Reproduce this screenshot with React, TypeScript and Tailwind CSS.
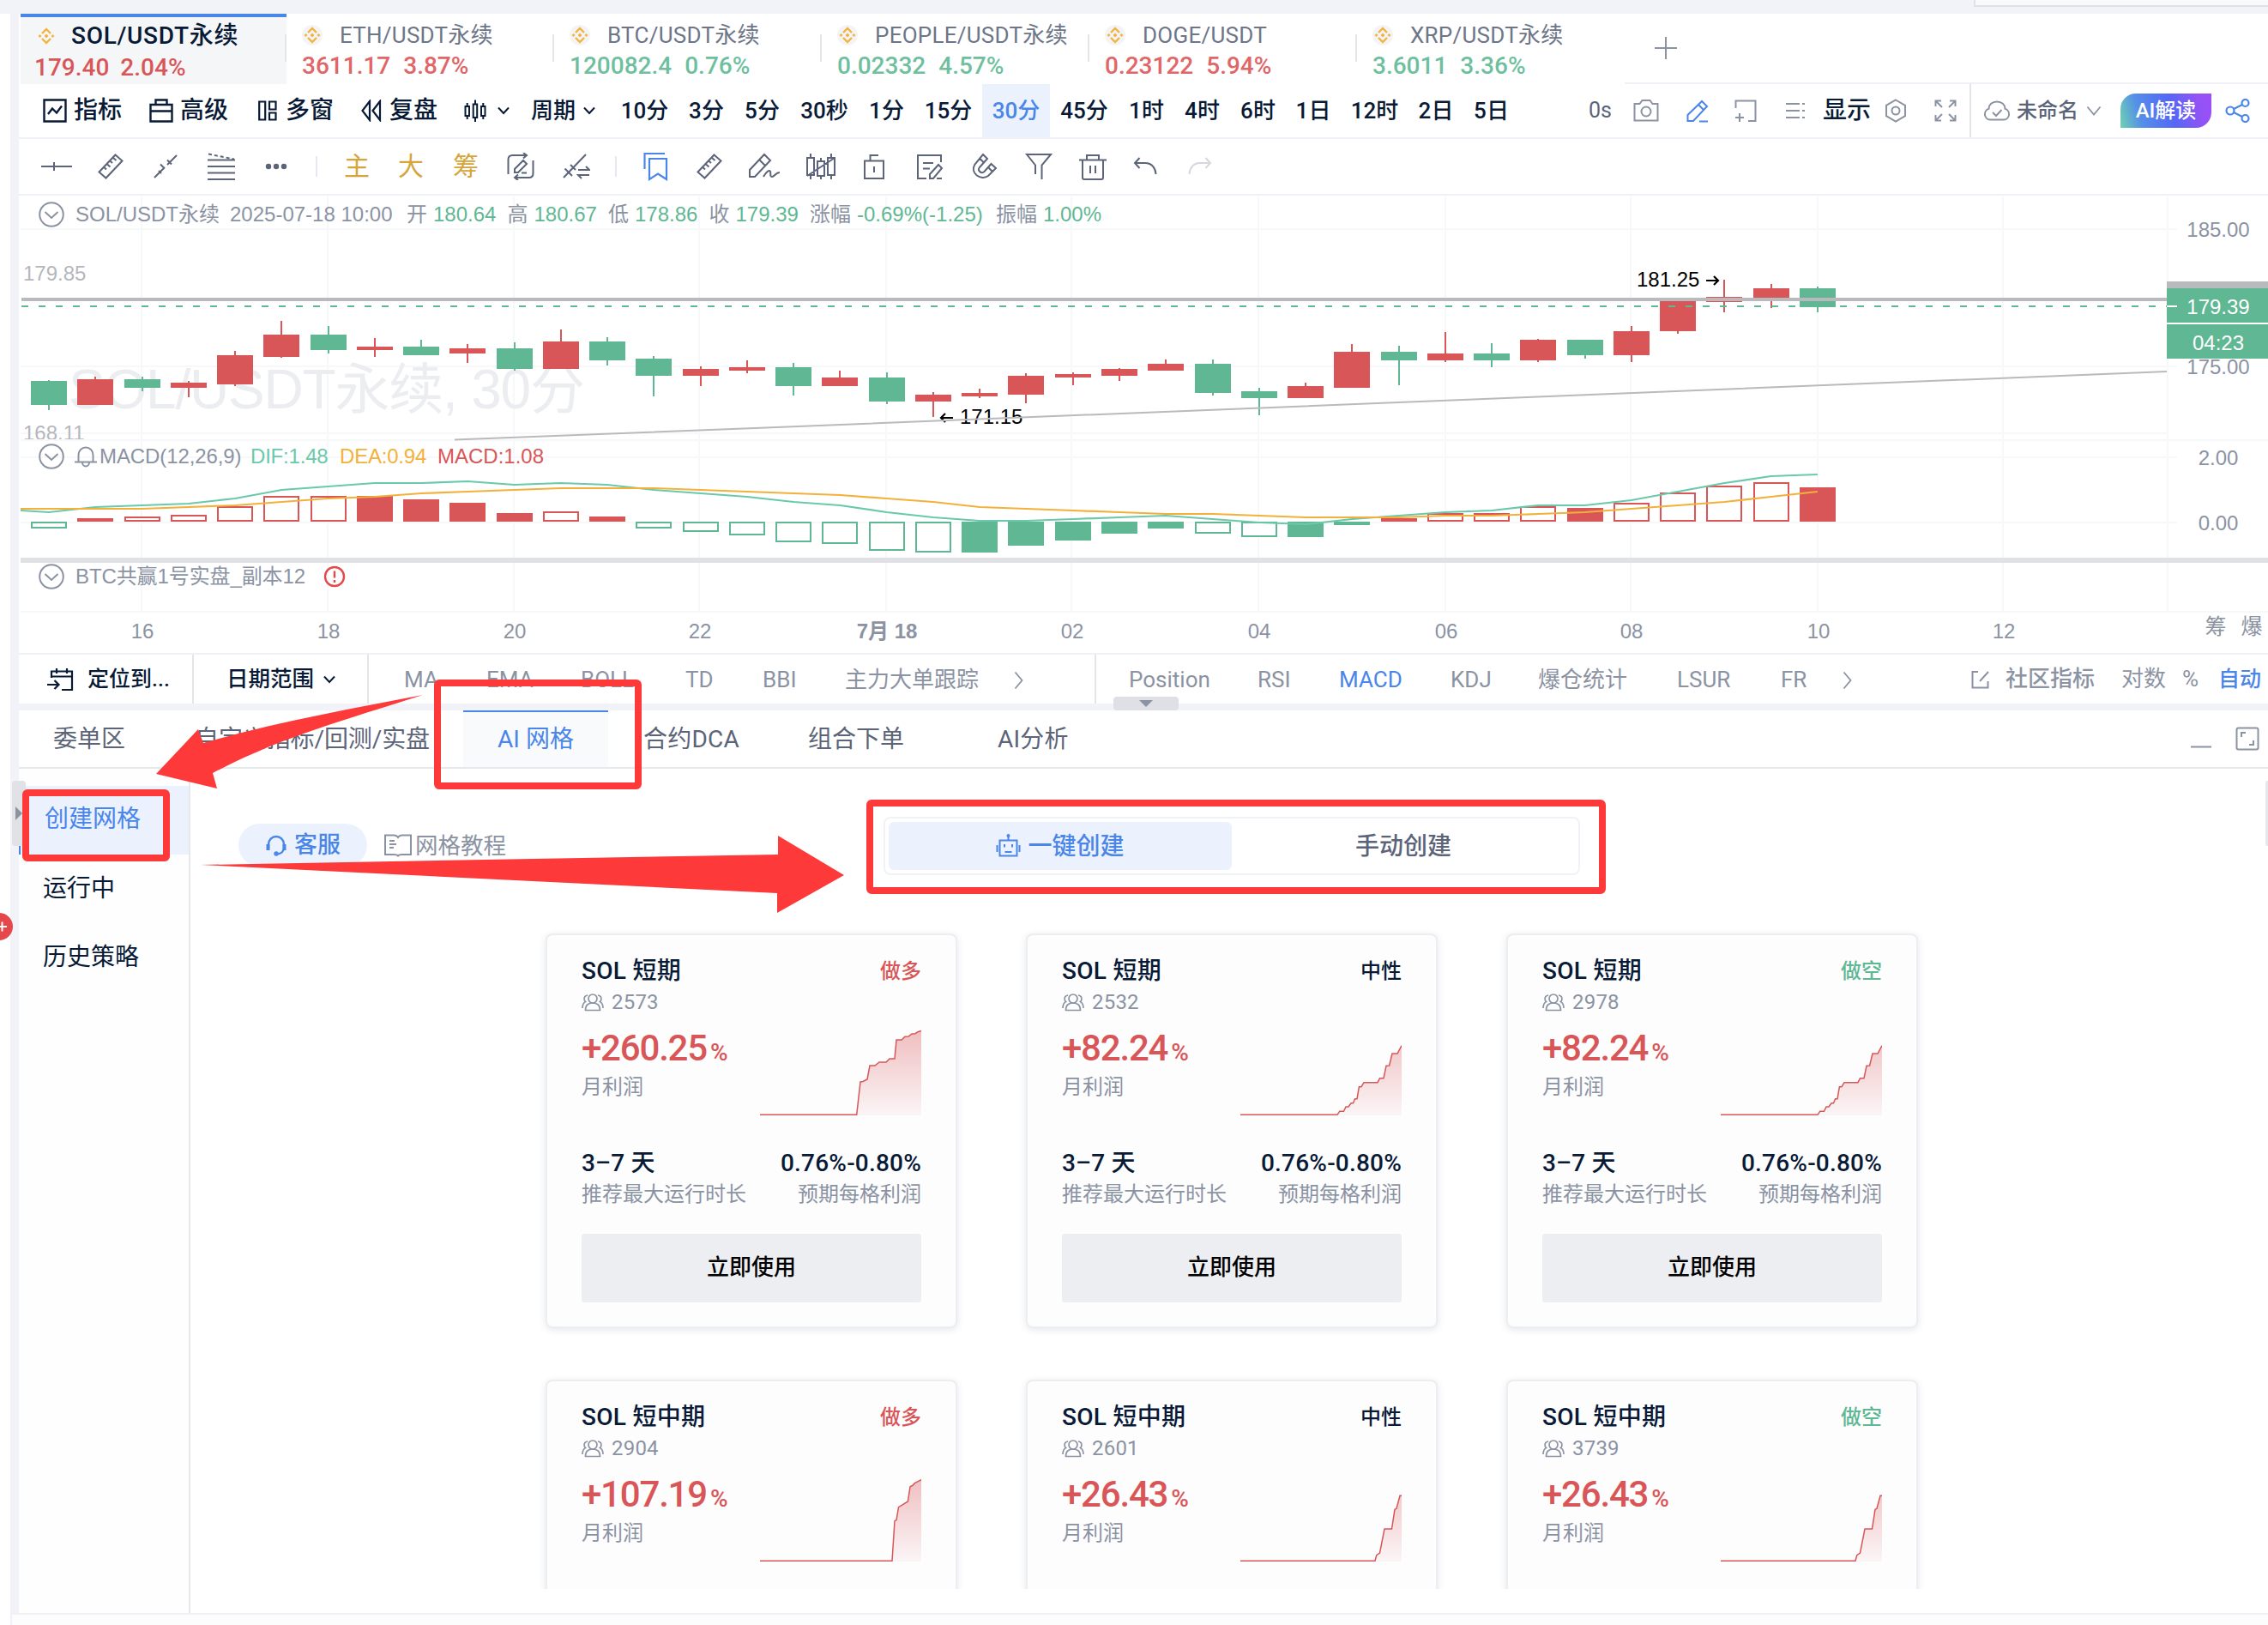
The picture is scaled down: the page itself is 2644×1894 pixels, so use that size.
import type { ReactNode } from "react";

type IconProps = { w?: number; h?: number; className?: string; sw?: number; children: ReactNode };

function Icon({ w = 32, h = 32, className = "", sw = 2, children }: IconProps) {
  return (
    <svg width={w} height={h} viewBox={`0 0 ${w} ${h}`} fill="none" stroke="currentColor" strokeWidth={sw} className={`shrink-0 ${className}`}>
      {children}
    </svg>
  );
}

const ChevronDown = ({ className = "" }: { className?: string }) => (
  <Icon w={16} h={10} className={className}>
    <path d="M2 1.500 8 8l6-6.500" />
  </Icon>
);

const ChevronRight = () => (
  <Icon w={12} h={22} sw={1.8}>
    <path d="M1.500 1.500 9.500 11l-8 9.500" />
  </Icon>
);

const Ruler = () => (
  <Icon>
    <path d="M21.500 2.500 29.500 9.500 10.500 29.500 2.500 22.500zM19 6l3.500 3M15.500 9.800l2.500 2.200M12 13.500l3.500 3M8.500 17.300l2.500 2.200" />
  </Icon>
);

const CircleChevron = () => (
  <Icon w={30} h={30}>
    <circle cx="15" cy="15" r="13.8" />
    <path d="m7.500 12 7.500 7 7.500-7" />
  </Icon>
);

const Binance = ({ plain = false }: { plain?: boolean }) => (
  <svg width="24" height="24" viewBox="0 0 24 24" className="shrink-0">
    {!plain && <circle cx="12" cy="12" r="12" fill="#f3f4f6" />}
    <g fill="none" stroke="#f3b341" strokeWidth="2.400">
      <path d="m7 9 5-5 5 5M7 15l5 5 5-5" />
    </g>
    <path fill="#f3b341" d="m12 9.500 2.500 2.500-2.500 2.500L9.500 12zM4.500 10l2 2-2 2-2-2zM19.500 10l2 2-2 2-2-2z" />
  </svg>
);

/* ---------- symbol tabs ---------- */

const tabs = [
  { name: "ETH/USDT永续", price: "3611.17", pct: "3.87%", color: "text-[#e06668]" },
  { name: "BTC/USDT永续", price: "120082.4", pct: "0.76%", color: "text-[#6fbf9f]" },
  { name: "PEOPLE/USDT永续", price: "0.02332", pct: "4.57%", color: "text-[#6fbf9f]" },
  { name: "DOGE/USDT", price: "0.23122", pct: "5.94%", color: "text-[#e06668]" },
  { name: "XRP/USDT永续", price: "3.6011", pct: "3.36%", color: "text-[#6fbf9f]" },
];

function SymbolTabs() {
  return (
    <div className="flex h-[82px] pl-[2px]">
      <div className="h-full w-[310px] border-t-4 border-[#4a86e8] bg-[#f5f6f8] pl-[18px] pt-2">
        <div className="flex h-[28px] items-center">
          <Binance plain />
          <span className="ml-[17px] text-[28px] font-medium leading-[28px] tracking-[0.7px] text-[#081a36]">SOL/USDT永续</span>
        </div>
        <div className="-ml-[2px] mt-[8px] flex gap-[13px] text-[28px] font-medium leading-[30px] text-[#d95658]">
          <span>179.40</span>
          <span>2.04%</span>
        </div>
      </div>
      {tabs.map((t) => (
        <div key={t.name} className="relative w-[312px] pl-[18px] pt-3">
          <i className="absolute -left-[2px] top-6 h-8 w-[2px] bg-[#e3e5e8]" />
          <div className="flex h-[26px] items-center">
            <Binance />
            <span className="ml-5 text-[26px] leading-[28px] tracking-[0.25px] text-[#6d7688]">{t.name}</span>
          </div>
          <div className={`mt-[8px] flex gap-[15px] text-[28px] font-medium leading-[30px] ${t.color}`}>
            <span>{t.price}</span>
            <span>{t.pct}</span>
          </div>
        </div>
      ))}
      <div className="flex-1 border-b-2 border-[#f0f1f6] pl-[34px] pt-[26px] text-[#8b93a3]">
        <Icon w={28} h={28}>
          <path d="M14 1v26M1 14h26" />
        </Icon>
      </div>
    </div>
  );
}

/* ---------- period bar ---------- */

const periods = [
  ["10分", "w-[79px]"],
  ["3分", "w-[65px]"],
  ["5分", "w-[65px]"],
  ["30秒", "w-[80px]"],
  ["1分", "w-[65px]"],
  ["15分", "w-[79px]"],
  ["30分", "w-[79px]"],
  ["45分", "w-[80px]"],
  ["1时", "w-[65px]"],
  ["4时", "w-[65px]"],
  ["6时", "w-[65px]"],
  ["1日", "w-[64px]"],
  ["12时", "w-[79px]"],
  ["2日", "w-[64px]"],
  ["5日", "w-[65px]"],
];

function PeriodBar() {
  return (
    <div className="flex h-[64px] items-center border-b-2 border-[#f0f1f6] pl-[28px] text-[28px] font-medium text-[#081a36]">
      <div className="flex w-[124px] items-center gap-[8px]">
        <Icon w={28} h={28} sw={2.4}>
          <path d="M1.500 1.500h25v25h-25zM6 18l5-6.500 5 5 6-8" />
        </Icon>
        指标
      </div>
      <div className="flex w-[127px] items-center gap-[8px]">
        <Icon w={28} h={28} sw={2.4}>
          <path d="M1.500 7h25v19.500h-25zM7.500 7V1.500h13V7M1.500 14.500h25" />
        </Icon>
        高级
      </div>
      <div className="flex w-[120px] items-center gap-[10px]">
        <Icon w={22} h={24} sw={2.2}>
          <path d="M1.200 1.500h7v21h-7zM13 1.500h7.500v9H13zM13 14.500h7.500v8H13z" />
        </Icon>
        多窗
      </div>
      <div className="flex w-[120px] items-center gap-[9px]">
        <Icon w={24} h={26} sw={2.2}>
          <path d="M10 2 1.500 13 10 24zM22 2l-8.500 11L22 24z" />
        </Icon>
        复盘
      </div>
      <div className="flex w-[78px] items-center gap-[12px]">
        <Icon w={26} h={28} sw={2}>
          <path d="M1.500 9h4.500v11H1.500zM3.700 5v4M3.700 20v4M10.700 6.500h4.500v15.500h-4.500zM13 1.500v5M13 22v5M20 9h4.500v11H20zM22.300 5v4M22.300 20v4" />
        </Icon>
        <ChevronDown />
      </div>
      <div className="flex w-[93px] items-center gap-2 text-[26px]">
        周期
        <ChevronDown />
      </div>
      {periods.map(([label, w]) => (
        <div
          key={label}
          className={`flex h-[62px] shrink-0 items-center justify-center text-[26px] ${w} ${label === "30分" ? "bg-[#ebf2fd] text-[#4a86e8]" : ""}`}
        >
          {label}
        </div>
      ))}
      <div className="ml-[81px] w-[52px] text-[25px] font-normal text-[#5b6478]">0s</div>
      <div className="flex w-[62px] text-[#8b93a3]">
        <Icon w={30} h={26}>
          <path d="M1.500 5h6l3-4h9l3 4h6v19.500h-27z" />
          <circle cx="15" cy="14" r="5.500" />
        </Icon>
      </div>
      <div className="flex w-[56px] text-[#4a86e8]">
        <Icon w={26} h={27}>
          <path d="M1.500 25v-7L18 2l6 6L8 25zM14 6l6 6M15 25.500h10" />
        </Icon>
      </div>
      <div className="flex w-[59px] text-[#8b93a3]">
        <Icon w={26} h={27}>
          <path d="M1.500 10V1.500h23V25H16M6 16v10M1 21h10" />
        </Icon>
      </div>
      <div className="flex w-[44px] text-[#8b93a3]">
        <Icon w={24} h={22}>
          <path d="M1 3h16M1 11h16M1 19h16M20 3h3M20 11h3M20 19h3" />
        </Icon>
      </div>
      <div className="w-[72px]">显示</div>
      <div className="flex w-[58px] text-[#8b93a3]">
        <Icon w={26} h={28}>
          <path d="m13 1.500 11 6.300v12.400L13 26.500 2 20.200V7.800z" />
          <circle cx="13" cy="14" r="4.500" />
        </Icon>
      </div>
      <div className="flex w-[41px] text-[#8b93a3]">
        <Icon w={26} h={26}>
          <path d="M1.500 8V1.500H8M1.500 1.500 9 9M18 1.500h6.500V8M24.500 1.500 17 9M1.500 18v6.500H8M1.500 24.500 9 17M18 24.500h6.500V18M24.500 24.500 17 17" />
        </Icon>
      </div>
      <div className="flex h-[62px] items-center border-l-2 border-[#e3e5e8] pl-[14px] text-[24px] text-[#5b6478]">
        <Icon w={32} h={24} className="text-[#8b93a3]">
          <path d="M8 22.500a6.500 6.500 0 0 1-1.500-12.700C6.500 5 10.500 1.500 16 1.500S25.500 5 25.500 9.800A6.500 6.500 0 0 1 24 22.500z" />
          <path d="m11 14 4 4 6.500-7" />
        </Icon>
        <span className="ml-[7px] w-[81px]">未命名</span>
        <Icon w={18} h={12} sw={1.8} className="text-[#8b93a3]">
          <path d="m1.500 1.500 7.500 9 7.500-9" />
        </Icon>
      </div>
      <div className="ml-[22px] flex h-10 w-[106px] items-center justify-center rounded-br-[18px] rounded-tl-[18px] bg-[linear-gradient(75deg,#6fd3b0_0%,#5590e8_22%,#5468f5_55%,#9352f6_85%,#9c4ff6_100%)] text-[24px] font-medium text-white">
        AI解读
      </div>
      <Icon w={30} h={28} className="ml-4 text-[#4a86e8]" sw={2.2}>
        <circle cx="6" cy="14" r="4.500" />
        <circle cx="23.500" cy="5" r="4" />
        <circle cx="23.500" cy="23" r="4" />
        <path d="m10 12 10-5M10 16l10 5" />
      </Icon>
    </div>
  );
}

/* ---------- drawing tools ---------- */

function DrawingBar() {
  return (
    <div className="flex h-[66px] items-center border-b-2 border-[#f0f1f6] pl-[26px] text-[#5b6478]">
      <div className="w-[65px]">
        <Icon w={36}>
          <path d="M0 16h36M15 11v10" />
        </Icon>
      </div>
      <div className="w-[66px]">
        <Ruler />
      </div>
      <div className="w-[63px]">
        <Icon w={28}>
          <path d="M1 29 13 17M16 14 27 3M8 13.500 13 18.500M16 8.500l5 5M6 21l3 3" />
        </Icon>
      </div>
      <div className="w-[65px]">
        <Icon w={32}>
          <path d="M0 8.500h32M0 16h32M0 23.500h32M0 31h32" />
          <path d="m1 1.500 30 6" strokeDasharray="4 3" />
        </Icon>
      </div>
      <div className="w-[61px] pl-[1px]">
        <Icon w={28} h={8}>
          <g fill="currentColor" stroke="none">
            <circle cx="5" cy="4" r="3.200" />
            <circle cx="14" cy="4" r="3.200" />
            <circle cx="23" cy="4" r="3.200" />
          </g>
        </Icon>
      </div>
      <i className="h-6 w-[2px] bg-[#e6e9ef]" />
      <div className="flex pl-[31px] text-[30px] leading-[32px] text-[#d6a53a]">
        <span className="w-[63px]">主</span>
        <span className="w-[64px]">大</span>
        <span className="w-[63px]">筹</span>
      </div>
      <div className="w-[65px]">
        <Icon>
          <path d="M1.500 25V8c0-3 2-5 5-5h17M19 0l4 3-4 3.500M30.500 9v15c0 3-2 5-5 5h-17M13 25.500l-4 3.500 4 3M9 23v-4l10-10 4 4-10 10zM17 23.500h6" />
        </Icon>
      </div>
      <div className="w-[61px]">
        <Icon>
          <path d="M1 29 27 2M2.500 18.500 11 27M9 14l6 6M18 20h13l-4-4M31 26H18l4 4" />
        </Icon>
      </div>
      <i className="h-6 w-[2px] bg-[#e6e9ef]" />
      <div className="ml-[31px] w-[61px] text-[#4a86e8]">
        <Icon w={30} h={34} sw={2.2}>
          <path d="M1.500 20V2H25M7 8h20v24l-10-6.500L7 32z" />
        </Icon>
      </div>
      <div className="w-[61px]">
        <Ruler />
      </div>
      <div className="w-[67px]">
        <Icon w={38}>
          <path d="M2 28v-8L19 2l7 7L8 28zM13 8l7 7M18 28c4-7 7-8 8-6s-1 6 2 6 4-5 9-5" />
        </Icon>
      </div>
      <div className="w-[67px]">
        <Icon w={36}>
          <path d="M2 6h8v20H2zM14 10h8v17h-8zM26 6h8v20h-8zM6 1v5M6 26v5M18 6v4M18 27v4M30 1v5M30 26v5M2 27 34 6" />
        </Icon>
      </div>
      <div className="w-[62px]">
        <Icon w={26}>
          <path d="M2 9.500h22V30H2zM8.500 9.500V3H18M13 16v7" />
        </Icon>
      </div>
      <div className="w-[64px]">
        <Icon>
          <path d="M12 30H2V3h27v8M8 12h12M8 18.500h8M16 30v-5l10-11 4 4-10 12zM24 30h6" />
        </Icon>
      </div>
      <div className="w-[63px]">
        <Icon>
          <path d="m14 2 5 5-9 10c-3 4 2 8 5.500 5l8-9 5.500 5-9 9C12 33-2 24 4.500 13.500zM10 6.500l5 5M20 17l5 5" />
        </Icon>
      </div>
      <div className="w-[63px]">
        <Icon>
          <path d="M12 25V14.500L2 2h28L19.500 14.500V31" />
        </Icon>
      </div>
      <div className="w-[63px]">
        <Icon>
          <path d="M0 8.500h32M9 8.500V3h14v5.500M4 8.500V29c0 1 1 2 2 2h20c1 0 2-1 2-2V8.500M13 15v9M19 15v9" />
        </Icon>
      </div>
      <div className="w-[64px]">
        <Icon w={28} h={22}>
          <path d="M7.500 1 2 7l5.500 6M2 7h12c8 0 12 6 12.500 13" />
        </Icon>
      </div>
      <div className="text-[#d5d8de]">
        <Icon w={28} h={22}>
          <path d="m20.500 1 5.500 6-5.500 6M26 7H14C6 7 2 13 1.500 20" />
        </Icon>
      </div>
    </div>
  );
}

/* ---------- chart ---------- */

const UP = "#d95658";
const DOWN = "#5fb794";
const candleX = (i: number) => 57 + i * 54.26;

// [up, bodyTop, bodyBottom, wickTop, wickBottom]
const candles: [number, number, number, number, number][] = [
  [0, 444, 472, 443, 478],
  [1, 442, 472, 439, 472],
  [0, 442, 452, 439, 456],
  [1, 446, 452, 444, 463],
  [1, 414, 448, 409, 450],
  [1, 390, 416, 374, 417],
  [0, 390, 408, 380, 412],
  [1, 404, 408, 394, 416],
  [0, 404, 414, 396, 414],
  [1, 406, 412, 401, 423],
  [0, 406, 430, 399, 432],
  [1, 398, 430, 384, 430],
  [0, 398, 420, 393, 426],
  [0, 418, 438, 415, 462],
  [1, 430, 438, 427, 450],
  [1, 428, 432, 420, 435],
  [0, 428, 450, 423, 461],
  [1, 440, 450, 432, 450],
  [0, 440, 468, 434, 471],
  [1, 460, 468, 457, 486],
  [1, 458, 462, 453, 464],
  [1, 438, 460, 435, 470],
  [1, 436, 440, 434, 449],
  [1, 430, 438, 429, 444],
  [1, 424, 432, 419, 432],
  [0, 424, 458, 419, 461],
  [0, 456, 464, 452, 484],
  [1, 450, 464, 446, 464],
  [1, 410, 452, 401, 452],
  [0, 410, 420, 403, 449],
  [1, 412, 420, 387, 422],
  [0, 412, 420, 400, 428],
  [1, 396, 420, 395, 422],
  [0, 396, 414, 396, 418],
  [1, 386, 414, 380, 422],
  [1, 350, 386, 350, 389],
  [1, 346, 352, 326, 364],
  [1, 336, 350, 331, 359],
  [0, 336, 358, 334, 364],
];

// [far edge of the bar, filled]
const macd: [number, number][] = [
  [616, 0], [604, 1], [602, 0], [600, 0], [590, 0], [578, 0], [578, 0], [578, 1], [582, 1], [586, 1],
  [598, 1], [596, 0], [602, 1], [616, 0], [620, 0], [624, 0], [632, 0], [634, 0], [642, 0], [644, 0],
  [644, 1], [636, 1], [630, 1], [622, 1], [616, 1], [622, 0], [626, 0], [626, 1], [612, 1], [604, 1],
  [598, 0], [598, 0], [590, 0], [592, 1], [586, 0], [574, 0], [566, 0], [562, 0], [568, 1],
];

const dif = [
  597, 591, 589, 587, 581, 571, 567, 563, 563, 561, 565, 563, 565, 571, 575, 579, 585, 589, 597, 603,
  607, 607, 605, 603, 601, 605, 609, 611, 605, 601, 597, 595, 589, 589, 583, 573, 563, 555, 553,
];
const dea = [
  593, 593, 593, 591, 589, 585, 581, 579, 575, 573, 571, 569, 569, 569, 571, 573, 575, 577, 581, 585,
  591, 593, 595, 597, 599, 599, 601, 603, 603, 603, 601, 601, 599, 597, 593, 589, 585, 579, 573,
];
const toPoints = (ys: number[]) => ys.map((y, i) => `${candleX(i)},${y}`).join(" ");

const gridX = [165, 382, 599, 815, 1033, 1249, 1467, 1685, 1901, 2119, 2335];
const times = ["16", "18", "20", "22", "7月 18", "02", "04", "06", "08", "10", "12"];

function Chart() {
  return (
    <svg width="2620" height="533" viewBox="24 228 2620 533" fontSize="24" fill="#8b93a3" className="block font-['Liberation_Sans','Noto_Sans_CJK_SC',sans-serif]">
      <g stroke="#f7f8fa" strokeWidth="2">
        {gridX.map((x) => (
          <path key={x} d={`M${x} 229V713`} />
        ))}
        <path d="M24 267H2538M24 427H2538M24 505H2526M24 513H2644M24 533H2538M24 609H2538M24 713H2644M2527 229V713" />
      </g>
      <text x="80" y="476" fontSize="64" textLength="602" fill="#ecedf0">SOL/USDT永续, 30分</text>

      {candles.map(([up, top, bottom, high, low], i) => (
        <g key={i} fill={up ? UP : DOWN}>
          <rect x={Math.round(candleX(i)) - 1} y={high} width="2" height={low - high} />
          <rect x={Math.round(candleX(i)) - 21} y={top} width="42" height={bottom - top} />
        </g>
      ))}
      <path d="M25 349H2526" stroke="#b9babd" strokeWidth="4" />
      <path d="M25 357H2526" stroke={DOWN} strokeWidth="2" strokeDasharray="8 12" />

      {macd.map(([edge, filled], i) => {
        const color = edge < 608 ? UP : DOWN;
        return (
          <rect
            key={i}
            x={Math.round(candleX(i)) - 20}
            y={Math.min(edge, 608) + 1}
            width="40"
            height={Math.abs(edge - 608) - 2}
            fill={filled ? color : "#fff"}
            stroke={color}
            strokeWidth="2"
          />
        );
      })}
      <g fill="none" strokeWidth="2.200">
        <polyline points={`24,595 ${toPoints(dif)}`} stroke="#6ac9ab" />
        <polyline points={`24,593 ${toPoints(dea)}`} stroke="#f3b13c" />
      </g>

      <g fill="#000">
        <text x="1908" y="334">181.25</text>
        <text x="1119" y="494">171.15</text>
      </g>
      <g fill="none" stroke="#000" strokeWidth="2.200">
        <path d="M1989 327h14M1998 322l5 5-5 5M1111 487h-14M1102 482l-5 5 5 5" />
      </g>
      <path d="M530 512.500 880 499 1780 463 2526 433" fill="none" stroke="#b9babd" strokeWidth="2" />

      <g fill="#b5b7bd">
        <text x="27" y="327">179.85</text>
        <svg x="24" y="490" width="100" height="22" viewBox="0 0 100 22">
          <text x="3" y="23">168.11</text>
        </svg>
      </g>
      <path d="M24 653H2644" stroke="#dfe1e5" strokeWidth="6" />

      <g textAnchor="middle">
        <text x="2586" y="276">185.00</text>
        <text x="2586" y="436">175.00</text>
        <text x="2586" y="542">2.00</text>
        <text x="2586" y="618">0.00</text>
        {times.map((t, i) => (
          <text key={t} x={gridX[i] + 1} y="744" fontWeight={t.length > 2 ? 700 : 400}>{t}</text>
        ))}
        <text x="2583" y="739" fontSize="25">筹</text>
        <text x="2625" y="739" fontSize="25">爆</text>
        <rect x="2526" y="328" width="118" height="8" fill="#b9babd" />
        <rect x="2526" y="336" width="118" height="40" fill={DOWN} />
        <rect x="2526" y="378" width="118" height="40" fill={DOWN} />
        <path d="M2526 357h12" stroke="#fff" strokeWidth="2" />
        <text x="2586" y="366" fill="#fff">179.39</text>
        <text x="2586" y="408" fill="#fff">04:23</text>
      </g>
    </svg>
  );
}

const ohlc = [
  ["开", "180.64"],
  ["高", "180.67"],
  ["低", "178.86"],
  ["收", "179.39"],
];

function ChartPanel() {
  return (
    <div className="relative h-[535px] border-b-2 border-[#f0f1f6] pl-[2px] font-['Liberation_Sans','Noto_Sans_CJK_SC',sans-serif] text-[24px] leading-[30px] text-[#8b93a3]">
      <Chart />
      <div className="absolute left-[23px] top-[7px] flex h-[30px] items-center whitespace-nowrap">
        <CircleChevron />
        <span className="ml-[13px] w-[180px]">SOL/USDT永续</span>
        <span className="w-[206px]">2025-07-18 10:00</span>
        {ohlc.map(([k, v]) => (
          <span key={k} className="flex w-[117.500px]">
            <span className="w-[31px]">{k}</span>
            <span className="text-[#5fb794]">{v}</span>
          </span>
        ))}
        <span className="w-[55px]">涨幅</span>
        <span className="w-[162px] text-[#5fb794]">-0.69%(-1.25)</span>
        <span className="w-[55px]">振幅</span>
        <span className="text-[#5fb794]">1.00%</span>
      </div>
      <div className="absolute left-[23px] top-[289px] flex h-[30px] items-center whitespace-nowrap">
        <CircleChevron />
        <Icon w={26} h={26} className="ml-[12px]">
          <path d="M4.500 19V11a8.500 8.500 0 0 1 17 0v8M0 19.500h26M9 20c0 6 8 6 8 0" />
        </Icon>
        <span className="ml-[3px] w-[176px] tracking-[-0.1px]">MACD(12,26,9)</span>
        <span className="w-[104px]  text-[#6ac9ab] tracking-[-0.2px]">DIF:1.48</span>
        <span className="w-[114px] text-[#f3b13c] tracking-[-0.2px]">DEA:0.94</span>
        <span className="text-[#d95658]">MACD:1.08</span>
      </div>
      <div className="absolute left-[23px] top-[429px] flex h-[30px] items-center whitespace-nowrap">
        <CircleChevron />
        <span className="ml-[13px] w-[289px] tracking-[-0.1px]">BTC共赢1号实盘_副本12</span>
        <Icon w={26} h={26} sw={2.4} className="text-[#e5484a]">
          <circle cx="13" cy="13" r="11" />
          <path d="M13 6.500v8M13 17v3" />
        </Icon>
      </div>
    </div>
  );
}

/* ---------- indicator bar ---------- */

const mainIndicators = [
  ["MA", "w-[96px]"],
  ["EMA", "w-[110px]"],
  ["BOLL", "w-[122px]"],
  ["TD", "w-[90px]"],
  ["BBI", "w-[96px]"],
  ["主力大单跟踪", "w-[197px]"],
];
const subIndicators = [
  ["Position", "w-[150px]"],
  ["RSI", "w-[95px]"],
  ["MACD", "w-[130px]"],
  ["KDJ", "w-[102px]"],
  ["爆仓统计", "w-[162px]"],
  ["LSUR", "w-[121px]"],
  ["FR", "w-[72px]"],
];

function IndicatorBar() {
  return (
    <div className="relative flex h-[65px] items-center border-b-8 border-[#f2f3f8] whitespace-nowrap text-[26px] text-[#8b93a3]">
      <div className="flex h-full w-[204px] items-center border-r-2 border-[#e3e5e8] pl-[33px] text-[25px] font-medium text-[#081a36]">
        <Icon w={32} h={28} sw={2.2} className="mr-[15px]">
          <path d="M5 12V4.500h24V26H17M11 1v6M23 1v6M5 10.500h24M0 20h13M8.500 15l5 5-5 5" />
        </Icon>
        定位到...
      </div>
      <div className="flex h-full w-[204px] items-center border-r-2 border-[#e3e5e8] pl-[38px] text-[25.500px] font-medium text-[#081a36]">
        <span className="w-[112px]">日期范围</span>
        <ChevronDown />
      </div>
      <div className="flex h-full w-[848px] items-center border-r-2 border-[#e3e5e8] pl-[41px] pt-[2px]">
        {mainIndicators.map(([label, w]) => (
          <span key={label} className={`shrink-0 ${w}`}>{label}</span>
        ))}
        <ChevronRight />
      </div>
      <div className="flex h-full items-center pl-[38px] pt-[2px]">
        {subIndicators.map(([label, w]) => (
          <span key={label} className={`shrink-0 ${w} ${label === "MACD" ? "text-[#4a86e8]" : ""}`}>{label}</span>
        ))}
        <ChevronRight />
      </div>
      <Icon w={22} h={22} className="ml-[138px] mr-[18px]">
        <path d="M8 2H1.500v18.500h18V13M20 2 10 13" />
      </Icon>
      <span className="w-[135px] font-medium">社区指标</span>
      <span className="w-[71px]">对数</span>
      <span className="w-[42px] text-[26px]">%</span>
      <span className="text-[25px] font-medium text-[#4a86e8]">自动</span>
      <div className="absolute left-[1276px] top-[49px] flex h-4 w-[76px] items-center justify-center rounded bg-[#dee0e5]">
        <svg width="16" height="8" viewBox="0 0 16 8" fill="#8b93a3">
          <path d="M0 0h16L8 8z" />
        </svg>
      </div>
    </div>
  );
}

/* ---------- bottom tabs ---------- */

function BottomTabs() {
  return (
    <div className="flex h-[68px] border-b-2 border-[#e6e9ec] whitespace-nowrap text-[28px] leading-[68px] text-[#5b6478]">
      <span className="ml-[40px] w-[165px]">委单区</span>
      <span className="w-[313px] tracking-[-0.1px]">自定义指标/回测/实盘</span>
      <span className="h-[66px] w-[169px] border-t-2 border-[#4a86e8] bg-[#f9fafc] text-center leading-[64px] text-[#4a86e8]">AI 网格</span>
      <span className="ml-[41px] w-[192px] tracking-[0.2px]">合约DCA</span>
      <span className="w-[221px]">组合下单</span>
      <span className="tracking-[0.2px]">AI分析</span>
      <div className="ml-auto flex items-center gap-7 pr-[10px] text-[#8b93a3]">
        <Icon w={24} h={24}>
          <path d="M0 21.500h24" />
        </Icon>
        <Icon w={28} h={28}>
          <rect x="1.500" y="1.500" width="25" height="25" rx="2" />
          <path d="M7 12V7h5M16 21h5v-5" />
        </Icon>
      </div>
    </div>
  );
}

/* ---------- strategy cards ---------- */

const sparks = {
  longShort: "112.700,99.300 117,61 120,60.500 125,58 128,42 134,42 139,38 147,38 151,34 157,34 159,12 165,12 169,8.300 173,8 177,5 181,4.700 184,2.700 188,1.500",
  short: "113,99.300 115.700,95.300 120.500,95.300 123,90 126,90 129,85.700 131.500,85.700 133.600,80.700 136,80.700 138.400,66.700 141,66.700 144,61.700 160,61.700 162.500,56.700 167,56.700 170,42.300 173.600,42 177,28 183,28 188,18.700",
  longMid: "154,99.300 157,52.700 159,51.700 161.500,36.700 166.500,33.700 172.400,30 175,12.700 178,11.300 180.400,8.700 188,4.700",
  mid: "157,99.300 158.700,92.700 162.500,90 168,62 176.500,62 180,39.300 182,38.300 186,23.300 188,23.300",
};

type Strategy = { title: string; side: string; users: string; profit: string; spark: string };

const shortTerm: Strategy[] = [
  { title: "SOL 短期", side: "做多", users: "2573", profit: "+260.25", spark: sparks.longShort },
  { title: "SOL 短期", side: "中性", users: "2532", profit: "+82.24", spark: sparks.short },
  { title: "SOL 短期", side: "做空", users: "2978", profit: "+82.24", spark: sparks.short },
];
const midTerm: Strategy[] = [
  { title: "SOL 短中期", side: "做多", users: "2904", profit: "+107.19", spark: sparks.longMid },
  { title: "SOL 短中期", side: "中性", users: "2601", profit: "+26.43", spark: sparks.mid },
  { title: "SOL 短中期", side: "做空", users: "3739", profit: "+26.43", spark: sparks.mid },
];

const sideColor: Record<string, string> = {
  做多: "text-[#d95658]",
  中性: "text-[#081a36]",
  做空: "text-[#5fb794]",
};

function StrategyCard({ s, children }: { s: Strategy; children?: ReactNode }) {
  return (
    <div className="h-[460px] w-[480px] rounded-lg border-2 border-[#eceef1] bg-[#fdfdfe] px-10 pt-[24px] shadow-[0_2px_8px_rgba(30,50,80,0.12)]">
      <div className="flex h-9 items-center justify-between text-[28px] font-medium text-[#081a36]">
        <span className="tracking-[0.3px]">{s.title}</span>
        <span className={`text-[24px] ${sideColor[s.side]}`}>{s.side}</span>
      </div>
      <div className="mt-[3px] flex h-[30px] items-center gap-[9px] text-[24px] tracking-[0.2px] text-[#8b93a3]">
        <Icon w={26} h={21} sw={1.7}>
          <circle cx="13" cy="6" r="5" />
          <path d="M4.500 19.500c0-6 3.500-8.500 8.500-8.500s8.500 2.500 8.500 8.500zM7 2C2 2.500 2.500 8 4.500 9.500 2 11 1 13 1 17M19 2c5 .5 4.500 6 2.500 7.500 2.500 1.500 3.500 3.500 3.500 7.500" />
        </Icon>
        {s.users}
      </div>
      <div className="flex h-[118px] justify-between">
        <div className="pt-[17px]">
          <div className="whitespace-nowrap text-[42px] font-medium leading-[44px] tracking-[-1.200px] text-[#d95658]">
            {s.profit}
            <span className="ml-[4px] text-[28px] tracking-normal">%</span>
          </div>
          <div className="mt-[2px] text-[24px] leading-[32px] text-[#8b93a3]">月利润</div>
        </div>
        <svg width="188" height="101" viewBox="0 0 188 101" className="mt-[17px]">
          <defs>
            <linearGradient id="fade" gradientUnits="userSpaceOnUse" x1="0" y1="0" x2="0" y2="100">
              <stop offset="0" stopColor="#d95658" stopOpacity="0.380" />
              <stop offset="1" stopColor="#d95658" stopOpacity="0.050" />
            </linearGradient>
          </defs>
          <polygon points={`${s.spark} 188,100 110,100`} fill="url(#fade)" />
          <polyline points={`0,99.300 ${s.spark}`} fill="none" stroke="#d95658" strokeWidth="1.500" />
        </svg>
      </div>
      {children}
    </div>
  );
}

function CardDetails() {
  return (
    <>
      <div className="mt-[37px] flex h-9 items-center justify-between text-[28px] font-medium text-[#081a36]">
        <span className="tracking-[0.2px]">3–7 天</span>
        <span className="tracking-[0.2px]">0.76%-0.80%</span>
      </div>
      <div className="mt-[2px] flex h-8 items-center justify-between text-[24px] text-[#8b93a3]">
        <span>推荐最大运行时长</span>
        <span>预期每格利润</span>
      </div>
      <button className="mt-[30px] block h-20 w-full rounded bg-[#edeef1] pb-[2px] text-[26px] font-medium text-black">立即使用</button>
    </>
  );
}

function GridPanel() {
  return (
    <div className="flex h-[984px] text-[28px] text-[#081a36]">
      <aside className="w-[200px] border-r-2 border-[#e6e8ec] bg-[#fefefe] pt-5">
        <div className="h-20 bg-[#ebf2fd] pl-[30px] leading-[78px] text-[#4a86e8]">创建网格</div>
        <div className="h-20 pl-[28px] leading-[79px]">运行中</div>
        <div className="h-20 pl-[28px] leading-[79px]">历史策略</div>
      </aside>
      <div className="flex-1">
        <div className="flex pt-[56px]">
          <div className="mt-2 flex h-[50px] items-center pl-[56px]">
            <div className="flex h-[50px] w-[150px] items-center justify-center gap-[8px] rounded-full bg-[#ebf2fd] font-medium text-[#4a86e8]">
              <Icon w={26} h={26} sw={2.4}>
                <path d="M4 16V12a9 9 0 0 1 18 0v4c0 4-3 7-8 7.500" />
                <path d="M3.500 12v7M22.500 12v7" strokeWidth="4" />
                <circle cx="13" cy="23" r="1.500" />
              </Icon>
              <span className="pt-[1px] text-[27px]">客服</span>
            </div>
            <Icon w={34} h={28} className="ml-[19px] mr-[3px] text-[#8b93a3]">
              <path d="M2 2.500h10c2 0 4 1 5 2.500 1-1.500 3-2.500 5-2.500h10V25H22c-2 0-4 0-5 1.500C16 25 14 25 12 25H2zM7 9h6M7 13h8M7 17h5" />
            </Icon>
            <span className="pt-[1px] text-[26.500px] text-[#8b93a3]">网格教程</span>
          </div>
          <div className="ml-[440px] flex h-[68px] w-[812px] rounded-lg border-2 border-[#f1f2f7] p-1 font-medium">
            <div className="flex h-[56px] w-[400px] items-center justify-center gap-[8px] rounded-md bg-[#ebf2fd] text-[#4a86e8]">
              <Icon w={29} h={30} sw={2}>
                <path d="M4.500 8.500h20v18h-20zM1.500 14v8M27.500 14v8M14.500 3v5.500M10.500 22h8M10 13v3.500M19 13v3.500" />
                <circle cx="14.500" cy="3" r="1" />
              </Icon>
              <span className="pt-[1px]">一键创建</span>
            </div>
            <div className="flex h-[56px] w-[400px] items-center justify-center pt-[1px] text-[#5b6478]">手动创建</div>
          </div>
        </div>
        <div className="h-[832px] overflow-hidden pl-[414px] pt-[68px]">
          <div className="flex gap-20">
            {shortTerm.map((s) => (
              <StrategyCard key={s.side} s={s}>
                <CardDetails />
              </StrategyCard>
            ))}
          </div>
          <div className="mt-[60px] flex gap-20">
            {midTerm.map((s) => (
              <StrategyCard key={s.side} s={s} />
            ))}
          </div>
        </div>
      </div>
    </div>
  );
}

/* ---------- red marks drawn over the page ---------- */

function Marks() {
  return (
    <>
      <div className="absolute left-[506px] top-[792px] h-[128px] w-[242px] rounded-md border-8 border-[#fd3939]" />
      <div className="absolute left-[26px] top-[920px] h-[84px] w-[172px] rounded-md border-8 border-[#fd3939]" />
      <div className="absolute left-[1010px] top-[932px] h-[110px] w-[862px] rounded-md border-8 border-[#fd3939]" />
      <svg width="820" height="260" viewBox="180 808 820 260" fill="#fd3939" className="absolute left-[180px] top-[808px]">
        <path d="M493 810C410 826 320 842 237 866L231 850 182 902 253 919 248 901C330 858 400 840 493 810z" />
        <path d="M234 1008 907 996V974L984 1020 906 1064V1041z" />
      </svg>
    </>
  );
}

export default function App() {
  return (
    <div className="relative h-[1894px] w-[2644px] overflow-hidden bg-white font-['Roboto','Noto_Sans_CJK_SC',sans-serif]">
      <div className="flex h-4 justify-end bg-[#f2f3f8]">
        <div className="h-2 w-[343px] border-b-2 border-l-2 border-[#dfe1e5] bg-[#f9fafc]" />
      </div>
      <div className="flex h-[1864px]">
        <div className="w-[12px]" />
        <div className="w-[10px] bg-[#f2f3f8]" />
        <main className="w-[2622px]">
          <SymbolTabs />
          <PeriodBar />
          <DrawingBar />
          <ChartPanel />
          <IndicatorBar />
          <BottomTabs />
          <GridPanel />
        </main>
      </div>
      <div className="ml-[12px] h-[14px] border-l-2 border-t-2 border-[#f0f1f6] bg-[#fcfcfd]" />

      <div className="absolute left-[14px] top-[910px] flex h-[76px] w-4 items-center justify-center rounded bg-[#e0e2e6]">
        <svg width="8" height="16" viewBox="0 0 8 16" fill="#8b93a3">
          <path d="M0 0v16l8-8z" />
        </svg>
      </div>
      <i className="absolute left-[22px] top-[986px] h-[10px] w-[2px] bg-[#4a86e8]" />
      <i className="absolute right-0 top-[910px] h-[76px] w-[3px] rounded-l bg-[#e6e8eb]" />
      <svg width="16" height="32" viewBox="0 0 16 32" className="absolute left-0 top-[1064px]">
        <circle cx="-1" cy="16" r="16" fill="#e5484a" />
        <path d="M0 16h8M2.500 10.500v11" stroke="#fff" strokeWidth="2" />
      </svg>
      <Marks />
    </div>
  );
}
